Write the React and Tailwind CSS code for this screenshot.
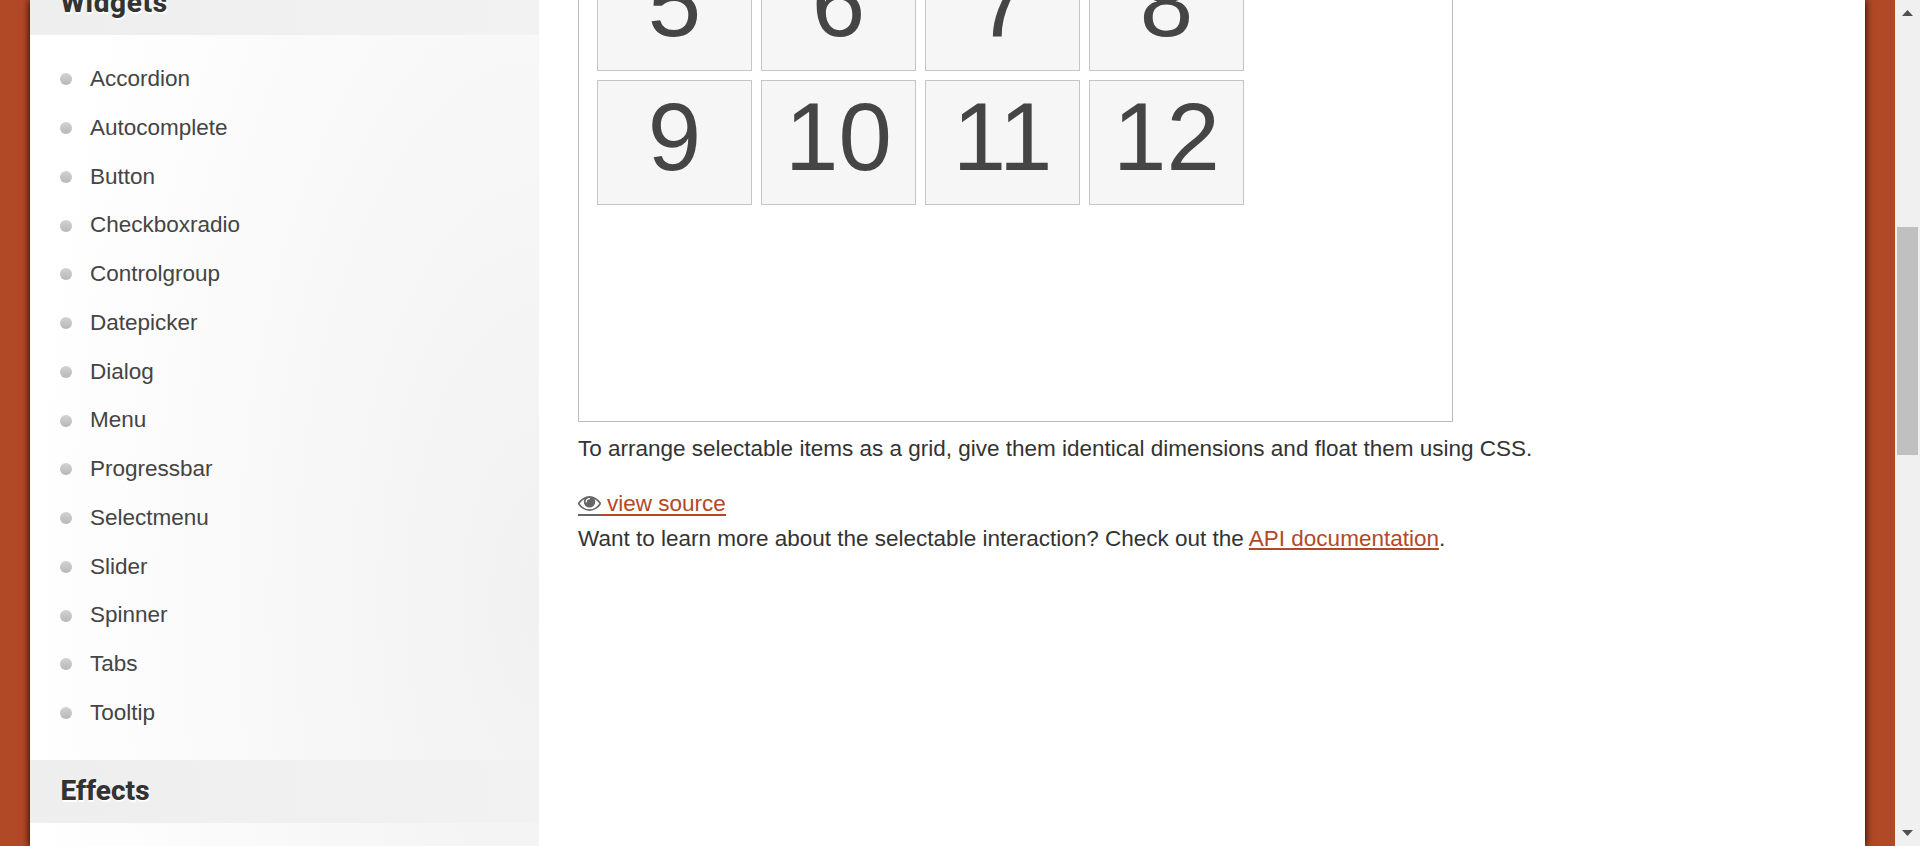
const widgets = [
  'Accordion', 'Autocomplete', 'Button', 'Checkboxradio', 'Controlgroup', 'Datepicker', 'Dialog',
  'Menu', 'Progressbar', 'Selectmenu', 'Slider', 'Spinner', 'Tabs', 'Tooltip',
];

const cells = [5, 6, 7, 8, 9, 10, 11, 12];

function SectionTitle({ children, className = 'tracking-[0px]' }) {
  return (
    <h3 className={`flex h-[63px] shrink-0 items-center bg-linear-to-r from-[#eeeeee] to-[#f2f2f2] pb-[2px] pl-[30.5px] font-['Roboto',sans-serif] text-[28px] leading-none font-extrabold text-[#333] [text-shadow:1px_2px_0_#fff] ${className}`}>
      {children}
    </h3>
  );
}

function Sidebar() {
  return (
    <aside className="flex w-[509px] shrink-0 flex-col bg-[radial-gradient(ellipse_520px_1150px_at_100%_600px,#f1f1f1,#ffffff)]">
      <div className="-mt-[28px] flex flex-col">
        <SectionTitle className="tracking-[0.6px]">Widgets</SectionTitle>
        <ul className="flex h-[725px] flex-col pt-[20px] pl-[30px]">
          {widgets.map((name) => (
            <li key={name} className="flex h-[48.75px] shrink-0 items-center gap-[18px] text-[#444]">
              <span className="size-[12px] rounded-full bg-linear-to-b from-[#d2d2d2] to-[#b8b8b8]" />
              <a className="pb-[1px]">{name}</a>
            </li>
          ))}
        </ul>
        <SectionTitle>Effects</SectionTitle>
      </div>
    </aside>
  );
}

function Eye() {
  return (
    <svg viewBox="0 384 1792 1152" className="h-[15px] w-[23px]" fill="#666">
      <path d="M1664 960q-152-236-381-353 61 104 61 225 0 185-131.5 316.5t-316.5 131.5-316.5-131.5-131.5-316.5q0-121 61-225-229 117-381 353 133 205 333.5 326.5t434.5 121.5 434.5-121.5 333.5-326.5zm-720-384q0-20-14-34t-34-14q-125 0-214.5 89.5t-89.5 214.5q0 20 14 34t34 14 34-14 14-34q0-86 61-147t147-61q20 0 34-14t14-34zm848 384q0 34-20 69-140 230-376.5 368.5t-499.5 138.5-499.5-139-376.5-368q-20-35-20-69t20-69q140-229 376.5-368t499.5-139 499.5 139 376.5 368q20 35 20 69z" />
    </svg>
  );
}

function Content() {
  return (
    <main className="flex flex-1 flex-col pl-[39px]">
      <div className="-mt-[73px] h-[495px] w-[875px] shrink-0 border border-[#bbb] pt-[18px] pl-[18px]">
        <div className="grid w-fit grid-cols-[repeat(4,155px)] gap-[9px]">
          {cells.map((n) => (
            <div
              key={n}
              className="h-[125px] border border-[#c5c5c5] bg-[#f6f6f6] text-center text-[96px] leading-[111px] text-[#454545]"
            >
              {n}
            </div>
          ))}
        </div>
      </div>
      <p className="mt-[10px] h-[34px] leading-[34px]">
        To arrange selectable items as a grid, give them identical dimensions and float them using CSS.
      </p>
      <a className="mt-[21px] flex h-[34px] text-[#b24926]">
        <span className="flex h-[29px] w-[23px] items-end border-b-2 border-[#666] pb-[3px]">
          <Eye />
        </span>
        <span className="h-[29px] border-b-2 border-[#b24926] pl-[6px] leading-[34px]">view source</span>
      </a>
      <p className="mt-px h-[34px] leading-[34px]">
        Want to learn more about the selectable interaction? Check out the{' '}
        <a className="text-[#b24926] underline decoration-2 underline-offset-[2px] [text-decoration-skip-ink:none]">API documentation</a>.
      </p>
    </main>
  );
}

function Scrollbar() {
  return (
    <div className="flex w-[25px] shrink-0 flex-col items-center bg-[#f0f0f0]">
      <svg className="mt-[10px] h-[6px] w-[11px]" viewBox="0 0 11 6" fill="#505050">
        <path d="M5.5 0 11 6H0z" />
      </svg>
      <div className="mt-[211px] h-[228px] w-[21px] bg-[#c0c0c0]" />
      <svg className="mt-auto mb-[10px] h-[6px] w-[11px]" viewBox="0 0 11 6" fill="#505050">
        <path d="M0 0h11L5.5 6z" />
      </svg>
    </div>
  );
}

export default function App() {
  return (
    <div className="flex h-[846px] w-[1920px] overflow-hidden bg-[#b24926] font-['Liberation_Sans',Arial,sans-serif] text-[22.5px] text-[#333]">
      <div className="flex flex-1 pr-[30px] pl-[30px]">
        <div className="flex flex-1 bg-white shadow-[0_0_8px_#000]">
          <Sidebar />
          <Content />
        </div>
      </div>
      <Scrollbar />
    </div>
  );
}
